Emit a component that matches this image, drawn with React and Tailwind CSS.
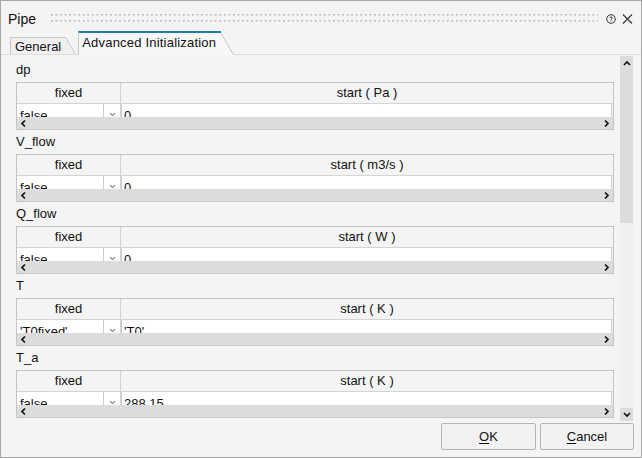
import React from 'react';

const sections = [
  { label: 'dp', unit: 'Pa', fixed: 'false', start: '0' },
  { label: 'V_flow', unit: 'm3/s', fixed: 'false', start: '0' },
  { label: 'Q_flow', unit: 'W', fixed: 'false', start: '0' },
  { label: 'T', unit: 'K', fixed: "'T0fixed'", start: "'T0'" },
  { label: 'T_a', unit: 'K', fixed: 'false', start: '288.15' },
];

function ArrowLeft() {
  return (
    <svg width="6" height="7" viewBox="0 0 6 7">
      <path d="M4 0.5 L1 3.5 L4 6.5" stroke="#111" strokeWidth="1.6" fill="none" />
    </svg>
  );
}
function ArrowRight() {
  return (
    <svg width="6" height="7" viewBox="0 0 6 7">
      <path d="M2 0.5 L5 3.5 L2 6.5" stroke="#111" strokeWidth="1.6" fill="none" />
    </svg>
  );
}

function ParamTable({ s }) {
  return (
    <div className="h-[48px] border border-[#c4c4c4] flex flex-col bg-[#f4f4f4]">
      <div className="h-[21px] flex border-b border-[#d4d4d4] shrink-0">
        <div className="w-[104px] border-r border-[#d4d4d4] text-center leading-[20px]">fixed</div>
        <div className="flex-1 text-center leading-[20px]">start ( {s.unit} )</div>
      </div>
      <div className="h-[13px] flex overflow-hidden shrink-0">
        <div className="w-[87px] bg-white border-r border-[#cccccc] pl-[3px] pt-[5px] leading-[13px] whitespace-nowrap">{s.fixed}</div>
        <div className="w-[16px] bg-white flex justify-center pt-[8px]">
          <svg width="7" height="5" viewBox="0 0 7 5">
            <path d="M1 1 L3.5 3.5 L6 1" stroke="#9a9a9a" strokeWidth="1.3" fill="none" />
          </svg>
        </div>
        <div className="w-[1px] bg-[#d4d4d4]" />
        <div className="flex-1 bg-white border-l border-r border-[#cccccc] pl-[2px] pt-[5px] leading-[13px] whitespace-nowrap">{s.start}</div>
        <div className="w-[1px] bg-[#f4f4f4]" />
      </div>
      <div className="h-[12px] bg-[#dcdcdc] flex items-center justify-between pl-[4px] pr-[4px] shrink-0">
        <ArrowLeft />
        <ArrowRight />
      </div>
    </div>
  );
}

export default function App() {
  return (
    <div className="w-[642px] h-[458px] border border-[#a8a8a8] bg-[#f4f4f4] flex flex-col font-['Liberation_Sans',Arial,sans-serif] text-[13px] text-[#111] overflow-hidden">
      {/* Title bar */}
      <div className="h-[30px] shrink-0 flex items-center pt-[5px] pl-[7px] pr-[8px]">
        <span className="text-[14px] leading-[16px]">Pipe</span>
        <div className="flex-1 ml-[15px] mr-[8px] h-[9px]">
          <svg width="100%" height="9">
            <defs>
              <pattern id="grip" x="0" y="0" width="4.55" height="6" patternUnits="userSpaceOnUse">
                <rect x="0" y="0" width="1.6" height="1.6" fill="#b4b4b4" />
              </pattern>
            </defs>
            <rect x="0" y="0" width="100%" height="8" fill="url(#grip)" />
          </svg>
        </div>
        <svg width="10" height="10" viewBox="0 0 10 10" className="mr-[6px]">
          <circle cx="5" cy="5" r="4.3" stroke="#333" strokeWidth="1" fill="none" />
          <path d="M3.6 4 C3.6 2.6 6.4 2.6 6.4 4 C6.4 4.9 5 4.9 5 6" stroke="#333" strokeWidth="0.9" fill="none" />
          <rect x="4.55" y="6.6" width="0.9" height="0.9" fill="#333" />
        </svg>
        <svg width="11" height="10" viewBox="0 0 11 10">
          <path d="M1 0.5 L10 9.5 M10 0.5 L1 9.5" stroke="#333" strokeWidth="1.1" />
        </svg>
      </div>

      {/* Tabs */}
      <div className="h-[24px] shrink-0 flex items-end">
        <div className="w-[9px] h-full border-b border-[#dcdcdc]" />
        <div className="flex h-[18px] border-b border-[#dcdcdc]">
          <div className="h-full border-l border-t border-[#c8c8c8] bg-[#f0f0f0] pl-[4px] pr-[4px] leading-[17px]">General</div>
          <svg width="11" height="17" viewBox="0 0 11 17" className="block">
            <path d="M0 0 L0.5 0.5 L10.5 17 L0 17 Z" fill="#f0f0f0" />
            <path d="M0 0.5 L0.5 0.5 L10.5 17" stroke="#c8c8c8" fill="none" />
          </svg>
        </div>
        <div className="w-[2px] h-full border-b border-[#dcdcdc]" />
        <div className="flex h-[24px]">
          <div className="h-full border-l border-[#c8c8c8] border-t-2 border-t-[#1a7db6] bg-[#f7f7f7] pl-[3px] pr-[4px] leading-[20px] tracking-[0.2px]">Advanced Initialization</div>
          <svg width="14" height="24" viewBox="0 0 14 24" className="block">
            <path d="M0 0 L0.5 0 L13.5 24 L0 24 Z" fill="#f7f7f7" />
            <path d="M0 1 L0.5 1 L13.5 24" stroke="#c8c8c8" fill="none" />
            <rect x="0" y="0" width="1" height="2" fill="#1a7db6" />
          </svg>
        </div>
        <div className="flex-1 h-full border-b border-[#dcdcdc]" />
      </div>

      {/* Content */}
      <div className="h-[366px] shrink-0 flex pl-[15px]">
        <div className="w-[598px] flex flex-col pt-[3px]">
          {sections.map((s) => (
            <div key={s.label} className="flex flex-col">
              <div className="h-[24px] leading-[24px]">{s.label}</div>
              <ParamTable s={s} />
            </div>
          ))}
        </div>
        <div className="ml-[6px] w-[13px] mt-[1px] h-[365px] flex flex-col bg-[#f0f0f0]">
          <div className="h-[167px] bg-[#dcdcdc] flex justify-center pt-[4px]">
            <svg width="8" height="6" viewBox="0 0 8 6">
              <path d="M1 5 L4 2 L7 5" stroke="#111" strokeWidth="1.6" fill="none" />
            </svg>
          </div>
          <div className="flex-1" />
          <div className="h-[13px] bg-[#dcdcdc] flex justify-center items-center">
            <svg width="8" height="6" viewBox="0 0 8 6">
              <path d="M1 1 L4 4 L7 1" stroke="#111" strokeWidth="1.6" fill="none" />
            </svg>
          </div>
        </div>
      </div>

      {/* Footer */}
      <div className="flex-1 flex justify-end items-start pt-[2px] pr-[7px] gap-[4px]">
        <button className="w-[95px] h-[27px] border border-[#b4b4b4] rounded-[2px] bg-[#f2f2f2] text-[13px] leading-[25px] text-center">
          <span className="underline underline-offset-2">O</span>K
        </button>
        <button className="w-[94px] h-[27px] border border-[#b4b4b4] rounded-[2px] bg-[#f2f2f2] text-[13px] leading-[25px] text-center">
          <span className="underline underline-offset-2">C</span>ancel
        </button>
      </div>
    </div>
  );
}
